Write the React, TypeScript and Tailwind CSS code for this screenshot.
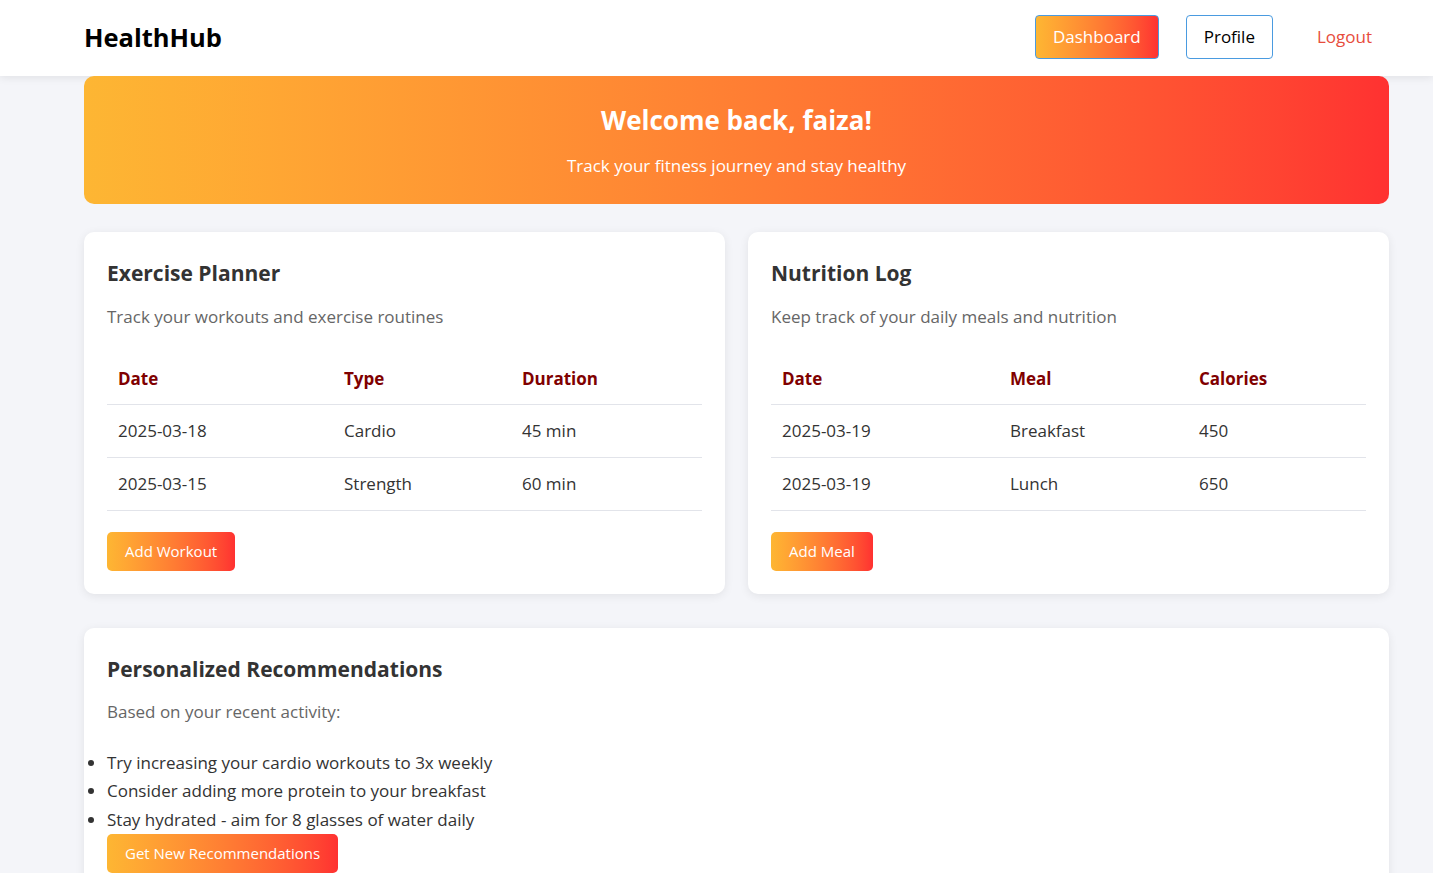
import React from "react";

const workouts = [
  { date: "2025-03-18", type: "Cardio", duration: "45 min" },
  { date: "2025-03-15", type: "Strength", duration: "60 min" },
];

const meals = [
  { date: "2025-03-19", meal: "Breakfast", calories: "450" },
  { date: "2025-03-19", meal: "Lunch", calories: "650" },
];

const tips = [
  "Try increasing your cardio workouts to 3x weekly",
  "Consider adding more protein to your breakfast",
  "Stay hydrated - aim for 8 glasses of water daily",
];

const gradBtn =
  "rounded-[5px] bg-gradient-to-r from-[#fdb633] to-[#ff3131] text-white text-[15px] h-[39px] px-[18px]";

const Card = ({
  title,
  subtitle,
  children,
}: {
  title: string;
  subtitle: string;
  children: React.ReactNode;
}) => (
  <div className="rounded-[10px] bg-white shadow-[0_2px_10px_rgba(0,0,0,0.08)] px-[23px] pt-[26px] pb-[23px]">
    <h2 className="text-[21px] font-bold text-[#333] leading-[30px]">{title}</h2>
    <p className="mt-[16px] text-[17px] text-[#666] leading-[26px]">{subtitle}</p>
    {children}
  </div>
);

const App = () => {
  return (
    <div className="min-h-screen bg-[#f4f5f9] font-['Open_Sans',sans-serif]">
      <header className="h-[76px] bg-white shadow-[0_2px_8px_rgba(0,0,0,0.08)] flex items-center pl-[84px] pr-[44px]">
        <h1 className="-mt-[2px] text-[25.5px] font-bold text-black">HealthHub</h1>
        <nav className="ml-auto flex items-center gap-[27px] text-[17px] -mt-[2px]">
          <button className="h-[44px] px-[17px] rounded-[4px] border border-[#4a9be0] bg-gradient-to-r from-[#fdb633] to-[#ff3131] text-white">
            Dashboard
          </button>
          <button className="h-[44px] px-[17px] rounded-[4px] border border-[#4a9be0] bg-white text-black">
            Profile
          </button>
          <button className="h-[44px] px-[17px] text-[#e74c3c]">Logout</button>
        </nav>
      </header>

      <main className="pl-[84px] pr-[44px]">
        <section className="h-[128px] rounded-[10px] bg-gradient-to-r from-[#fdb633] to-[#ff3131] flex flex-col items-center justify-center text-white">
          <h2 className="mt-[1px] text-[26px] font-bold leading-[34px]">Welcome back, faiza!</h2>
          <p className="mt-[17px] text-[17px] leading-[24px]">Track your fitness journey and stay healthy</p>
        </section>

        <div className="mt-[28px] grid grid-cols-2 gap-[23px]">
          <Card title="Exercise Planner" subtitle="Track your workouts and exercise routines">
            <table className="mt-[23px] w-full text-left text-[17px] text-[#333]">
              <thead>
                <tr className="border-b border-[#e2e4ea]">
                  <th className="w-[226px] px-[11px] h-[51px] font-bold text-[#800000]">Date</th>
                  <th className="w-[178px] px-[11px] font-bold text-[#800000]">Type</th>
                  <th className="px-[11px] font-bold text-[#800000]">Duration</th>
                </tr>
              </thead>
              <tbody>
                {workouts.map((w) => (
                  <tr key={w.date} className="border-b border-[#e2e4ea]">
                    <td className="px-[11px] h-[53px]">{w.date}</td>
                    <td className="px-[11px]">{w.type}</td>
                    <td className="px-[11px]">{w.duration}</td>
                  </tr>
                ))}
              </tbody>
            </table>
            <button className={`${gradBtn} mt-[21px]`}>Add Workout</button>
          </Card>

          <Card title="Nutrition Log" subtitle="Keep track of your daily meals and nutrition">
            <table className="mt-[23px] w-full text-left text-[17px] text-[#333]">
              <thead>
                <tr className="border-b border-[#e2e4ea]">
                  <th className="w-[228px] px-[11px] h-[51px] font-bold text-[#800000]">Date</th>
                  <th className="w-[189px] px-[11px] font-bold text-[#800000]">Meal</th>
                  <th className="px-[11px] font-bold text-[#800000]">Calories</th>
                </tr>
              </thead>
              <tbody>
                {meals.map((m) => (
                  <tr key={m.meal} className="border-b border-[#e2e4ea]">
                    <td className="px-[11px] h-[53px]">{m.date}</td>
                    <td className="px-[11px]">{m.meal}</td>
                    <td className="px-[11px]">{m.calories}</td>
                  </tr>
                ))}
              </tbody>
            </table>
            <button className={`${gradBtn} mt-[21px]`}>Add Meal</button>
          </Card>
        </div>

        <div className="mt-[34px] rounded-[10px] bg-white shadow-[0_2px_10px_rgba(0,0,0,0.08)] px-[23px] pt-[26px] pb-[23px]">
          <h2 className="text-[21px] font-bold text-[#333] leading-[30px]">Personalized Recommendations</h2>
          <p className="mt-[15px] text-[17px] text-[#666] leading-[26px]">Based on your recent activity:</p>
          <ul className="mt-[24px] list-disc text-[17px] text-[#333] leading-[28.5px]">
            {tips.map((t) => (
              <li key={t}>{t}</li>
            ))}
          </ul>
          <button className={`${gradBtn}`}>Get New Recommendations</button>
        </div>
      </main>
    </div>
  );
};

export default App;
